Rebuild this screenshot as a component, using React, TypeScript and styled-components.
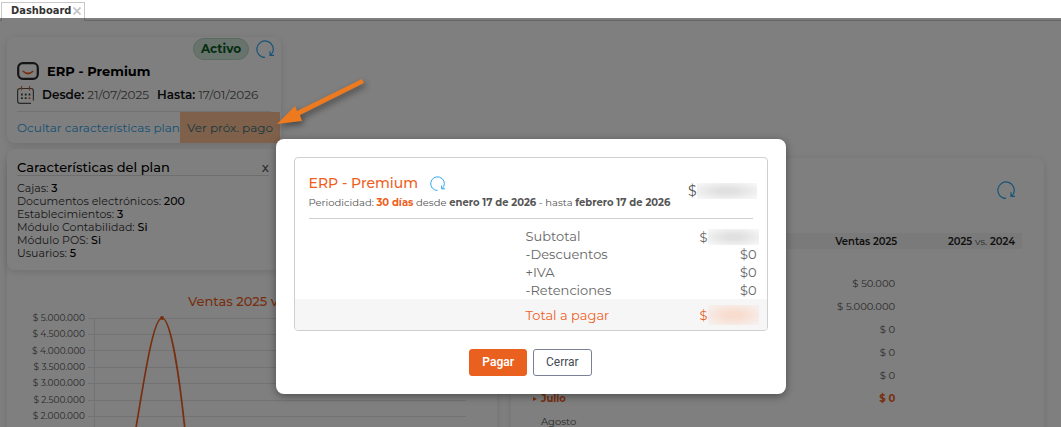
import React from "react";
import styled, { createGlobalStyle, css } from "styled-components";

const GlobalStyle = createGlobalStyle`
  * { box-sizing: border-box; }
  body {
    margin: 0;
    background: #ffffff;
    color: #555555;
    font-family: Montserrat, Inter, sans-serif;
    font-size: 12px;
  }
  button { font-family: inherit; cursor: pointer; }
`;

const Shell = styled.div`
  position: relative;
  display: flex;
  flex-direction: column;
  height: 100vh;
  overflow: hidden;
`;

const TabBar = styled.nav`
  display: flex;
  height: 21px;
  padding: 2px 1px 0;
  border-bottom: 1px solid #c8c8c8;
`;

const Tab = styled.div`
  display: flex;
  align-items: flex-start;
  gap: 2px;
  height: 19px;
  padding: 0 3px 0 9px;
  border: 1px solid #c8c8c8;
  border-bottom-color: #ffffff;
  color: #333333;
  background: #ffffff;
`;

const TabLabel = styled.span`
  font: bold 11px/16px "DejaVu Sans Condensed", "Open Sans", sans-serif;
`;

const TabClose = styled.button`
  display: flex;
  align-items: center;
  height: 16px;
  padding: 0;
  border: 0;
  background: none;
  color: #c4c4c4;
`;

const Main = styled.main`
  display: flex;
  flex: 1;
  flex-direction: column;
  gap: 15px;
  padding: 16px 17px 0 7px;
`;

const panel = css`
  border-radius: 8px;
  background: #ffffff;
  box-shadow: 0 2px 8px rgba(0, 0, 0, 0.13);
`;

const PlanArea = styled.div`
  position: relative;
  width: 274px;
`;

const PlanCard = styled.section`
  ${panel}
  display: flex;
  flex-direction: column;
  height: 106px;
`;

const PlanStatus = styled.div`
  display: flex;
  align-items: center;
  justify-content: flex-end;
  gap: 7px;
  padding: 1px 7px 0 0;
`;

const StatusPill = styled.span`
  padding: 0 7px;
  border: 1px solid #b4d8bf;
  border-radius: 11px;
  background: #d1e7dd;
  color: #0a5a22;
  font-weight: 700;
  font-size: 12px;
  line-height: 20px;
`;

const IconButton = styled.button`
  display: flex;
  padding: 0;
  border: 0;
  background: none;
  color: #2fa8ee;
`;

const PlanName = styled.h2`
  display: flex;
  align-items: center;
  gap: 8px;
  margin: 0;
  padding: 0 10px;
  color: #000000;
  font-weight: 700;
  font-size: 13px;
  line-height: 22px;
`;

const PlanDates = styled.div`
  display: flex;
  align-items: center;
  gap: 8px;
  margin: 0 10px;
  padding: 4px 0 7px;
  border-bottom: 1px solid #e4e4e4;
  line-height: 18px;
  white-space: nowrap;
`;

const DateItem = styled.span`
  b { color: #111111; font-weight: 600; }
`;

const PlanLinks = styled.div`
  display: flex;
  flex: 1;
  justify-content: space-between;
  padding: 0 1px 0 10px;
`;

const PlanLink = styled.button<{ $marked?: boolean }>`
  width: ${(p) => (p.$marked ? "100px" : "auto")};
  padding: 0;
  border: 0;
  background: ${(p) => (p.$marked ? "#ffc296" : "none")};
  color: ${(p) => (p.$marked ? "#2a7080" : "#2e9fe6")};
  font-size: 12px;
  white-space: nowrap;
`;

const Features = styled.section`
  ${panel}
  position: absolute;
  z-index: 1;
  top: 112px;
  left: 0;
  width: 100%;
  height: 121px;
  padding: 10px 12px 0 10px;
  color: #333333;
`;

const FeaturesHead = styled.div`
  display: flex;
  justify-content: space-between;
  margin-bottom: 6px;
  border-bottom: 1px solid #dddddd;
`;

const FeaturesTitle = styled.h3`
  margin: 0;
  color: #000000;
  font-weight: 500;
  font-size: 13px;
  line-height: 16px;
`;

const CloseButton = styled.button`
  padding: 0;
  border: 0;
  background: none;
  color: #555555;
  font-weight: 500;
  font-size: 13px;
  line-height: 14px;
`;

const FeatureList = styled.ul`
  margin: 0;
  padding: 0;
  list-style: none;
  font-size: 11px;
  line-height: 13px;
  b { color: #000000; font-weight: 500; }
`;

const Columns = styled.div`
  display: grid;
  flex: 1;
  grid-template-columns: 490fr 533fr;
  gap: 14px;
`;

const ChartPanel = styled.section`
  ${panel}
  padding: 134px 0 0;
`;

const ChartTitle = styled.h3`
  margin: 0;
  padding-left: 4px;
  color: #ee5f1e;
  font-weight: 500;
  font-size: 13px;
  line-height: 18px;
  text-align: center;
`;

const ChartBody = styled.div`
  display: flex;
  gap: 3px;
  padding: 0 31px 0 25px;
`;

const Axis = styled.ul`
  width: 53px;
  margin: 0;
  padding: 0;
  list-style: none;
  font-size: 9px;
  text-align: right;
  white-space: nowrap;
  li { height: 16px; line-height: 16px; }
  li:nth-child(3n + 2) { height: 17px; }
`;

const ChartDrawing = styled.svg`
  flex: 1;
  min-width: 0;
  height: 130px;
`;

const SalesPanel = styled.section`
  ${panel}
  padding: 23px 22px 0 20px;
`;

const SalesTools = styled.div`
  display: flex;
  align-items: flex-start;
  justify-content: flex-end;
  height: 52px;
  padding-right: 7px;
`;

const SalesTable = styled.table`
  width: 100%;
  border-collapse: collapse;
  table-layout: fixed;
  font-size: 10px;
`;

const HeadCell = styled.th<{ $last?: boolean }>`
  width: ${(p) => (p.$last ? "24%" : "auto")};
  height: 16px;
  padding: 0 7px;
  background: #f4f4f4;
  color: #222222;
  font-weight: 600;
  font-size: 10px;
  text-align: right;
  white-space: nowrap;
  small { color: #555555; font-weight: 400; font-size: 10px; }
`;

const SalesRow = styled.tr<{ $current?: boolean }>`
  height: 23px;
  color: ${(p) => (p.$current ? "#ee5f1e" : "#555555")};
  font-weight: ${(p) => (p.$current ? 700 : 400)};
  td, th { padding: 0 9px 0 0; font-weight: inherit; text-align: right; }
  th { padding: 0 0 0 ${(p) => (p.$current ? "2px" : "10px")}; text-align: left; }
`;

const Marker = styled.span`
  display: inline-block;
  margin-right: 4px;
  border-top: 2px solid transparent;
  border-bottom: 2px solid transparent;
  border-left: 4px solid #ee5f1e;
  vertical-align: middle;
`;

const Overlay = styled.div`
  position: absolute;
  z-index: 2;
  inset: 18px 0 0;
  display: flex;
  justify-content: center;
  align-items: flex-start;
  padding-top: 121px;
  background: rgba(0, 0, 0, 0.5);
`;

const Dialog = styled.div`
  display: flex;
  flex-direction: column;
  gap: 18px;
  width: 510px;
  padding: 18px;
  border-radius: 8px;
  background: #ffffff;
  box-shadow: 0 2px 8px rgba(0, 0, 0, 0.4);
`;

const Invoice = styled.div`
  overflow: hidden;
  border: 1px solid #cfcfcf;
  border-radius: 4px;
`;

const InvoiceHead = styled.div`
  display: flex;
  justify-content: space-between;
  align-items: flex-start;
  margin: 0 14px;
  padding: 15px 0 5px;
  border-bottom: 1px solid #cfcfcf;
`;

const InvoiceTitle = styled.h2`
  display: flex;
  align-items: center;
  gap: 12px;
  margin: 0;
  color: #ee5f1e;
  font-weight: 500;
  font-size: 14px;
  line-height: 20px;
`;

const Period = styled.p`
  margin: 0;
  font-size: 10px;
  line-height: 20px;
  white-space: nowrap;
  b { font-weight: 700; }
`;

const Accent = styled.b`
  color: #ee5f1e;
`;

const Amount = styled.span<{ $large?: boolean }>`
  display: inline-flex;
  align-items: center;
  height: ${(p) => (p.$large ? "36px" : "16px")};
  margin-right: ${(p) => (p.$large ? "-4px" : "-2px")};
  font-size: ${(p) => (p.$large ? "14px" : "13px")};
  vertical-align: middle;
`;

const Redacted = styled.span<{ $accent?: boolean; $wide?: boolean }>`
  width: ${(p) => (p.$wide ? "60px" : "51px")};
  height: ${(p) => (p.$accent ? "20px" : "16px")};
  background: ${(p) =>
    p.$accent
      ? "radial-gradient(ellipse, #f8dccf 20%, #f6f0ed 90%)"
      : "radial-gradient(ellipse, #e0e0e0 20%, #f6f6f6 90%)"};
`;

const Charges = styled.table`
  width: 100%;
  margin-top: 8px;
  border-collapse: collapse;
  color: #666666;
  font-size: 13px;
  line-height: 16px;
  th, td { height: 18px; padding: 0; font-weight: 400; }
  th { width: 50%; padding-left: 231px; text-align: left; white-space: nowrap; }
  td { padding-right: 10px; text-align: right; }
  tfoot { background: #f6f6f6; color: #ee5f1e; }
  tfoot th, tfoot td { height: 31px; }
`;

const Actions = styled.div`
  display: flex;
  justify-content: center;
  gap: 6px;
`;

const ActionButton = styled.button<{ $primary?: boolean }>`
  height: 27px;
  padding: 0 12px 1px;
  border: 1px solid ${(p) => (p.$primary ? "#e9601f" : "#7b8096")};
  border-radius: 3px;
  background: ${(p) => (p.$primary ? "#e9601f" : "#ffffff")};
  color: ${(p) => (p.$primary ? "#ffffff" : "#444b55")};
  font-family: Roboto, sans-serif;
  font-weight: ${(p) => (p.$primary ? 600 : 400)};
  font-size: 12px;
`;

const Pointer = styled.svg`
  position: absolute;
  z-index: 3;
  top: 72px;
  left: 270px;
  filter: drop-shadow(2px 3px 3px rgba(0, 0, 0, 0.45));
  pointer-events: none;
`;

const RefreshIcon = ({ size = 18 }: { size?: number }) => (
  <svg width={size} height={size} viewBox="0 0 18 18" fill="none" stroke="currentColor" strokeWidth="1.2">
    <path d="M9 17.4A8.2 8.2 0 1 1 16.4 12.8L14.4 15.4M14 11.3V15.4H18" />
  </svg>
);

const LogoIcon = () => (
  <svg width="22" height="18" viewBox="0 0 22 18" fill="none">
    <rect x="1.2" y="1.2" width="19.6" height="15.6" rx="4.5" stroke="#2a2a2a" strokeWidth="2.2" />
    <path d="M5.8 9Q11 14 16.2 9" stroke="#ee5f1e" strokeWidth="1.7" />
  </svg>
);

const CalendarIcon = () => (
  <svg width="17" height="18" viewBox="0 0 17 18" fill="none">
    <path d="M14 17.3H3Q.6 17.3 .6 15V5Q.6 2.5 3 2.5H14Q16.4 2.5 16.4 5V14.5" stroke="#555" strokeWidth="1.2" />
    <path d="M4.5 0V4.5M12.5 0V4.5" stroke="#ee5f1e" strokeWidth="1.2" />
    <path d="M4 8.5H13.5M4 12.2H11" stroke="#444" strokeWidth="1.8" strokeDasharray="1.8 2" />
    <path d="M11.6 12.2H13.4" stroke="#ee5f1e" strokeWidth="1.8" />
  </svg>
);

const CrossIcon = () => (
  <svg width="8" height="8" viewBox="0 0 8 8" stroke="currentColor" strokeWidth="1.7">
    <path d="M.5 .5 7.5 7.5M7.5 .5 .5 7.5" />
  </svg>
);

const features = [
  ["Cajas", "3"],
  ["Documentos electrónicos", "200"],
  ["Establecimientos", "3"],
  ["Módulo Contabilidad", "Si"],
  ["Módulo POS", "Si"],
  ["Usuarios", "5"],
];

const ticks = ["5.000.000", "4.500.000", "4.000.000", "3.500.000", "3.000.000", "2.500.000", "2.000.000"];

const sales = [
  { month: "", value: "" },
  { month: "", value: "$ 50.000" },
  { month: "", value: "$ 5.000.000" },
  { month: "", value: "$ 0" },
  { month: "", value: "$ 0" },
  { month: "", value: "$ 0" },
  { month: "Julio", value: "$ 0", current: true },
  { month: "Agosto", value: "" },
];

const charges = ["-Descuentos", "+IVA", "-Retenciones"];

export default function App() {
  return (
    <Shell>
      <GlobalStyle />
      <TabBar>
        <Tab>
          <TabLabel>Dashboard</TabLabel>
          <TabClose aria-label="Cerrar pestaña"><CrossIcon /></TabClose>
        </Tab>
      </TabBar>
      <Main>
        <PlanArea>
          <PlanCard>
            <PlanStatus>
              <StatusPill>Activo</StatusPill>
              <IconButton aria-label="Actualizar plan"><RefreshIcon /></IconButton>
            </PlanStatus>
            <PlanName><LogoIcon />ERP - Premium</PlanName>
            <PlanDates>
              <CalendarIcon />
              <DateItem><b>Desde:</b> 21/07/2025</DateItem>
              <DateItem><b>Hasta:</b> 17/01/2026</DateItem>
            </PlanDates>
            <PlanLinks>
              <PlanLink>Ocultar características plan</PlanLink>
              <PlanLink $marked>Ver próx. pago</PlanLink>
            </PlanLinks>
          </PlanCard>
          <Features>
            <FeaturesHead>
              <FeaturesTitle>Características del plan</FeaturesTitle>
              <CloseButton aria-label="Cerrar características">x</CloseButton>
            </FeaturesHead>
            <FeatureList>
              {features.map(([name, value]) => (
                <li key={name}>{name}: <b>{value}</b></li>
              ))}
            </FeatureList>
          </Features>
        </PlanArea>
        <Columns>
          <ChartPanel>
            <ChartTitle>Ventas 2025 vs 2024</ChartTitle>
            <ChartBody>
              <Axis>
                {ticks.map((tick) => <li key={tick}>$ {tick}</li>)}
              </Axis>
              <ChartDrawing viewBox="0 0 378 130" preserveAspectRatio="xMinYMin slice" fill="none">
                <path
                  d="M0 8.5H378M0 24.5H378M0 40.5H378M0 57.5H378M0 73.5H378M0 90.5H378M0 106.5H378M6.5 8V130"
                  stroke="#e4e4e4"
                />
                <path d="M46 130C56 70 65 8 74 8S92 70 98 130" stroke="#ee5f1e" strokeWidth="1.7" />
                <circle cx="74" cy="8" r="2" fill="#ee5f1e" />
              </ChartDrawing>
            </ChartBody>
          </ChartPanel>
          <SalesPanel>
            <SalesTools>
              <IconButton aria-label="Actualizar ventas"><RefreshIcon /></IconButton>
            </SalesTools>
            <SalesTable>
              <thead>
                <tr>
                  <HeadCell />
                  <HeadCell />
                  <HeadCell>Ventas 2025</HeadCell>
                  <HeadCell $last>2025 <small>vs.</small> 2024</HeadCell>
                </tr>
              </thead>
              <tbody>
                {sales.map(({ month, value, current }, i) => (
                  <SalesRow key={i} $current={current}>
                    <th scope="row">{current && <Marker />}{month}</th>
                    <td />
                    <td>{value}</td>
                    <td />
                  </SalesRow>
                ))}
              </tbody>
            </SalesTable>
          </SalesPanel>
        </Columns>
      </Main>
      <Overlay>
        <Dialog role="dialog" aria-modal="true" aria-label="Próximo pago">
          <Invoice>
            <InvoiceHead>
              <div>
                <InvoiceTitle>
                  ERP - Premium
                  <IconButton aria-label="Actualizar pago"><RefreshIcon size={15} /></IconButton>
                </InvoiceTitle>
                <Period>
                  Periodicidad: <Accent>30 días</Accent> desde <b>enero 17 de 2026</b> - hasta <b>febrero 17 de 2026</b>
                </Period>
              </div>
              <Amount $large>$<Redacted $wide /></Amount>
            </InvoiceHead>
            <Charges>
              <tbody>
                <tr><th scope="row">Subtotal</th><td><Amount>$<Redacted /></Amount></td></tr>
                {charges.map((name) => (
                  <tr key={name}><th scope="row">{name}</th><td>$0</td></tr>
                ))}
              </tbody>
              <tfoot>
                <tr><th scope="row">Total a pagar</th><td><Amount>$<Redacted $accent /></Amount></td></tr>
              </tfoot>
            </Charges>
          </Invoice>
          <Actions>
            <ActionButton $primary>Pagar</ActionButton>
            <ActionButton>Cerrar</ActionButton>
          </Actions>
        </Dialog>
      </Overlay>
      <Pointer width="96" height="58" viewBox="0 0 96 58" aria-hidden="true">
        <path d="M92 7 94 11 30 43 32 49 7 52 25 34 27 39Z" fill="#ee7a20" />
      </Pointer>
    </Shell>
  );
}
